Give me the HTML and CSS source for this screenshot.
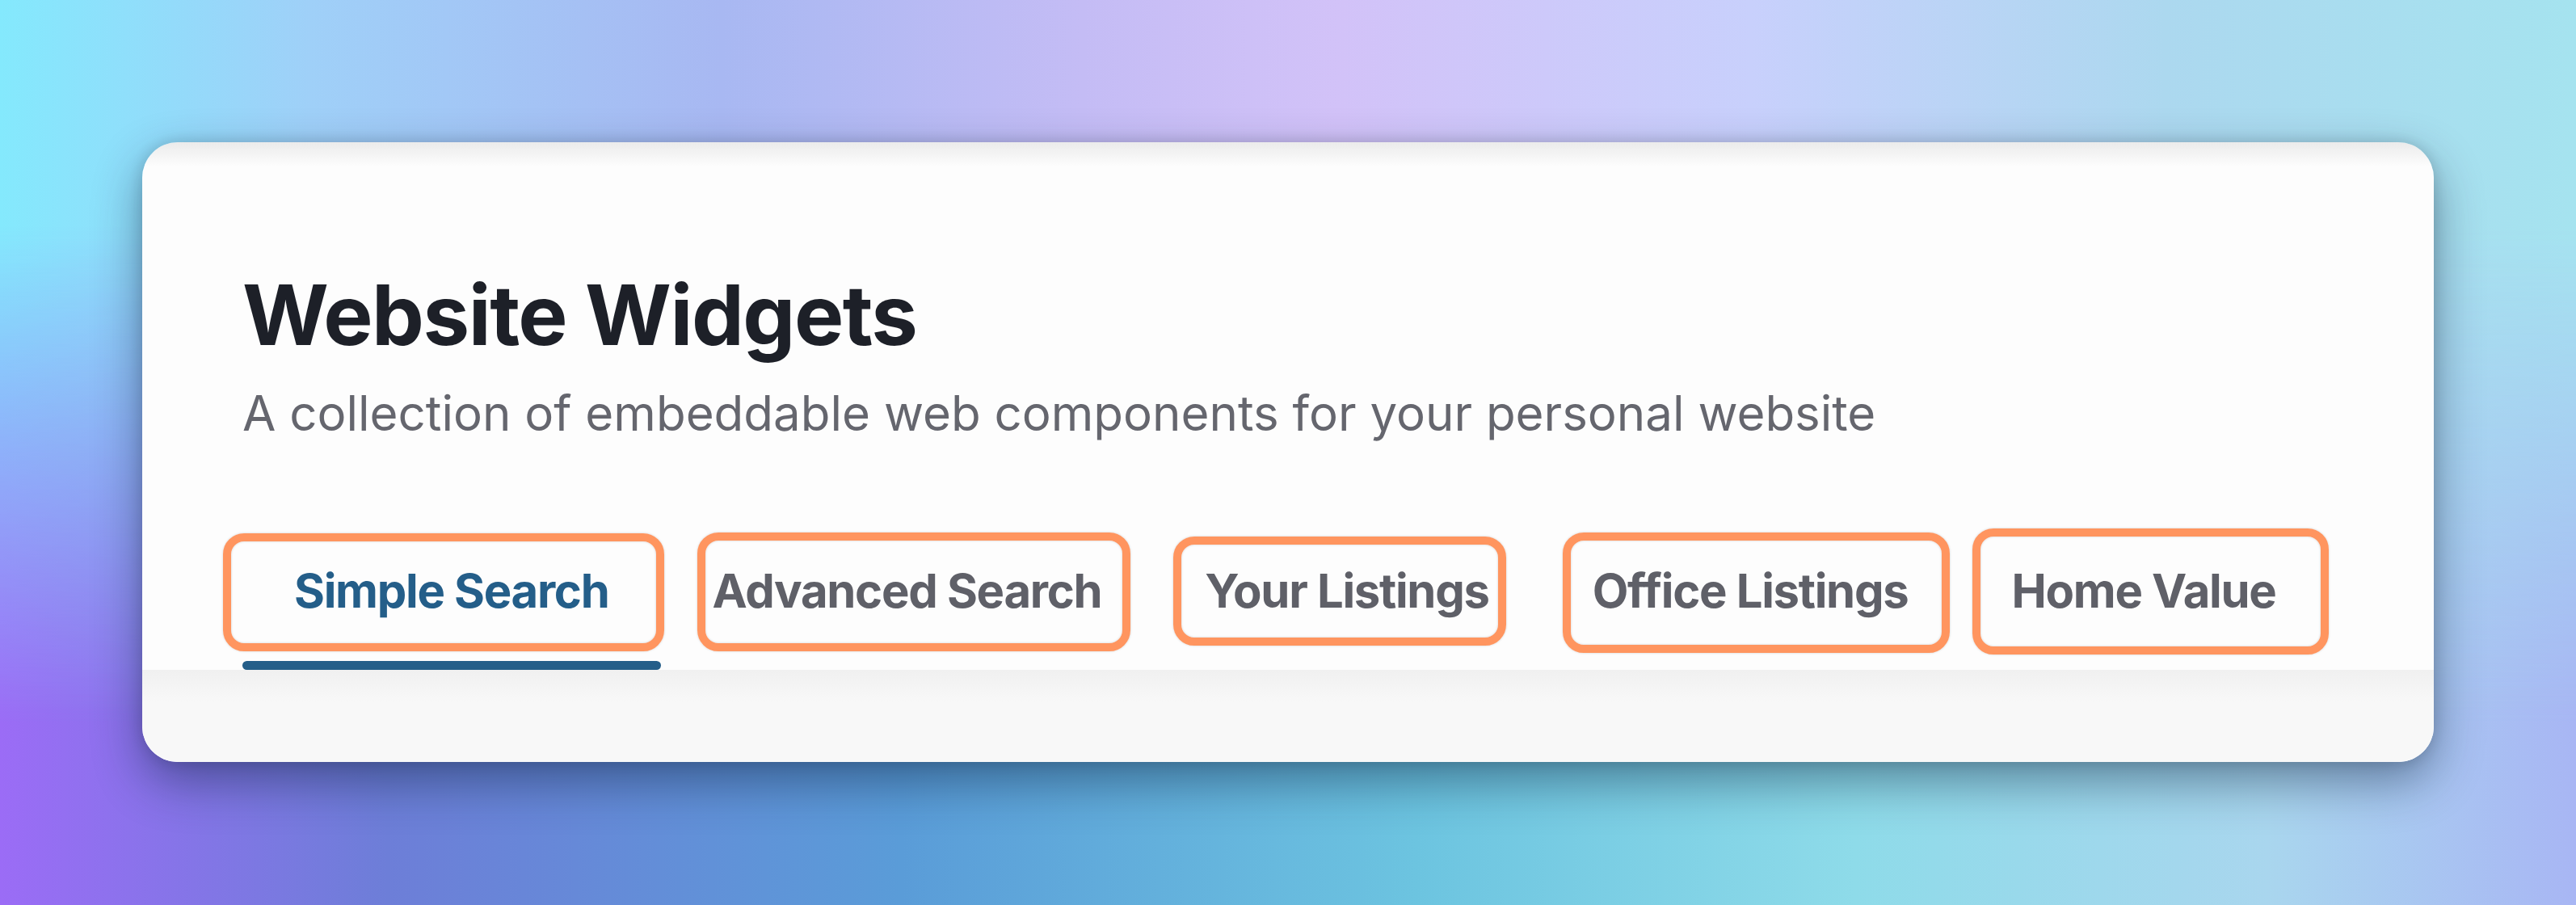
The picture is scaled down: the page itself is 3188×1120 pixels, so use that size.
FILE: index.html
```html
<!DOCTYPE html>
<html>
<head>
<title>Website Widgets</title>
<meta charset="UTF-8">
<meta name="viewport" content="width=device-width, initial-scale=1.0">
<link rel="stylesheet" href="styles.css">
</head>
<body>
<div class="backdrop"></div>
<div class="card">
  <div class="card-head">
    <h1 class="title">Website Widgets</h1>
    <p class="subtitle">A collection of embeddable web components for your personal website</p>
    <nav class="tabs">
      <a class="tab active mark-simple"><span class="mark"></span><span class="label">Simple Search</span></a>
      <a class="tab mark-advanced"><span class="mark"></span><span class="label">Advanced Search</span></a>
      <a class="tab mark-yours"><span class="mark"></span><span class="label">Your Listings</span></a>
      <a class="tab mark-office"><span class="mark"></span><span class="label">Office Listings</span></a>
      <a class="tab mark-home"><span class="mark"></span><span class="label">Home Value</span></a>
    </nav>
  </div>
  <div class="card-body"></div>
</div>
</body>
</html>
```

FILE: styles.css
```css
html, body {
  height: 100%;
}
body {
  margin: 0;
  padding: 176px;
  box-sizing: border-box;
  overflow: hidden;
  font-family: Inter, "Liberation Sans", sans-serif;
  /* lower half of the gradient, the top half is laid over it */
  background: linear-gradient(to right, #9b6cf6 0%, #6d7ed8 15%, #5a9cd8 35%, #6cc4e0 55%, #8edbe9 72%, #a9d6ee 88%, #a8b6f4 100%);
}
.backdrop {
  position: fixed;
  top: 0;
  left: 0;
  right: 0;
  bottom: 0;
  background: linear-gradient(to right, #84e9fd 0%, #9fd0f8 12%, #a8b8f2 28%, #c4bcf5 42%, #d2c2f8 52%, #c8d0fc 68%, #acd8ef 84%, #a5e3ef 100%);
  -webkit-mask-image: linear-gradient(to bottom, #000 25%, transparent 80%);
  mask-image: linear-gradient(to bottom, #000 25%, transparent 80%);
}
.card {
  position: relative;
  display: flex;
  flex-direction: column;
  height: 767px;
  border-radius: 44px;
  overflow: hidden;
  background: linear-gradient(#ebebeb, #fdfdfd 30px);
  box-shadow: 0 24px 60px rgba(10, 30, 60, 0.45), 0 0 20px rgba(0, 0, 0, 0.15);
}
.card-head {
  padding: 152px 124px 0;
}
.title {
  margin: 0;
  font-size: 103px;
  line-height: 124px;
  font-weight: 700;
  color: #1d2028;
  letter-spacing: -1.5px;
}
.subtitle {
  margin: 24px 0 0;
  font-size: 60px;
  line-height: 71px;
  color: #65666e;
}
.tabs {
  display: flex;
  margin-top: 93px;
}
.tab {
  position: relative;
  flex-shrink: 0;
  display: flex;
  flex-direction: column;
  padding-top: 56px;
  font-size: 58px;
  line-height: 70px;
  font-weight: 700;
  letter-spacing: -1.3px;
  color: #5f6068;
  white-space: nowrap;
  cursor: pointer;
}
.tab .label {
  padding: 0 64px;
}
.tab::after {
  content: "";
  height: 11px;
  margin-top: 52px;
  border-radius: 6px;
}
.tab.active {
  color: #245e89;
}
.tab.active::after {
  background-color: #245e89;
}
/* orange highlight drawn round each tab */
.mark {
  position: absolute;
  border: 10px solid #ff955f;
  border-radius: 26px;
  box-shadow: 0 0 3px rgba(0, 0, 0, 0.18), inset 0 0 3px rgba(0, 0, 0, 0.18);
}
.mark-simple .mark { left: -24px; right: -4px; top: 20px; bottom: 23px; }
.mark-advanced .mark { left: 45px; right: 28px; top: 19px; bottom: 23px; }
.mark-yours .mark { left: 25px; right: 43px; top: 24px; bottom: 30px; }
.mark-office .mark { left: 27px; right: 12px; top: 19px; bottom: 21px; }
.mark-home .mark { left: 16px; right: -1px; top: 14px; bottom: 19px; }
.card-body {
  flex: 1;
  background: linear-gradient(#f0f0f0, #f8f8f8 40px);
}
```
